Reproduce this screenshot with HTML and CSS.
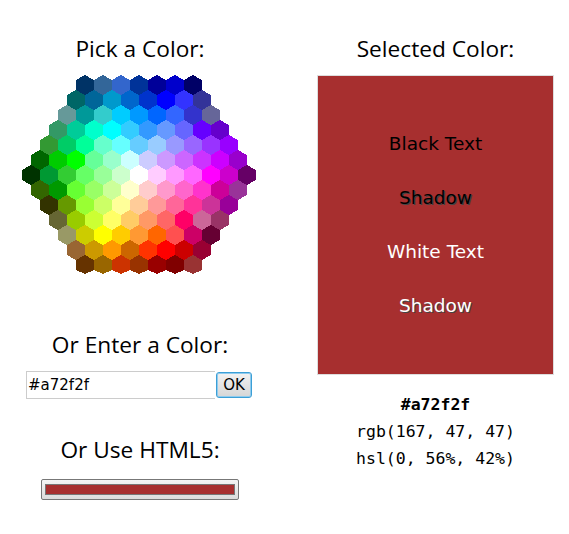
FILE: index.html
```html
<!DOCTYPE html>
<html lang="en">
<head>
<meta charset="utf-8">
<title>Color Picker</title>
<link rel="stylesheet" href="styles.css">
</head>
<body>
<main class="page">
  <section class="col col-left">
    <h3 class="title title-pick">Pick a Color:</h3>
    <svg class="map" width="234" height="200" viewBox="0 0 234 200" shape-rendering="crispEdges" role="img" aria-label="Color map">
      <defs><polygon id="h" points="9,0 18,5 18,15 9,20 0,15 0,5"/><polygon id="b" points="9,0 18,5 18,15 9,19 0,15 0,5"/></defs>
      <use href="#h" x="54" y="0" fill="#003366"/><use href="#h" x="72" y="0" fill="#336699"/><use href="#h" x="90" y="0" fill="#3366CC"/><use href="#h" x="108" y="0" fill="#003399"/><use href="#h" x="126" y="0" fill="#000099"/><use href="#h" x="144" y="0" fill="#0000CC"/><use href="#h" x="162" y="0" fill="#000066"/>
      <use href="#h" x="45" y="15" fill="#006666"/><use href="#h" x="63" y="15" fill="#006699"/><use href="#h" x="81" y="15" fill="#0099CC"/><use href="#h" x="99" y="15" fill="#0066CC"/><use href="#h" x="117" y="15" fill="#0033CC"/><use href="#h" x="135" y="15" fill="#0000FF"/><use href="#h" x="153" y="15" fill="#3333FF"/><use href="#h" x="171" y="15" fill="#333399"/>
      <use href="#h" x="36" y="30" fill="#669999"/><use href="#h" x="54" y="30" fill="#009999"/><use href="#h" x="72" y="30" fill="#33CCCC"/><use href="#h" x="90" y="30" fill="#00CCFF"/><use href="#h" x="108" y="30" fill="#0099FF"/><use href="#h" x="126" y="30" fill="#0066FF"/><use href="#h" x="144" y="30" fill="#3366FF"/><use href="#h" x="162" y="30" fill="#3333CC"/><use href="#h" x="180" y="30" fill="#666699"/>
      <use href="#h" x="27" y="45" fill="#339966"/><use href="#h" x="45" y="45" fill="#00CC99"/><use href="#h" x="63" y="45" fill="#00FFCC"/><use href="#h" x="81" y="45" fill="#00FFFF"/><use href="#h" x="99" y="45" fill="#33CCFF"/><use href="#h" x="117" y="45" fill="#3399FF"/><use href="#h" x="135" y="45" fill="#6699FF"/><use href="#h" x="153" y="45" fill="#6666FF"/><use href="#h" x="171" y="45" fill="#6600FF"/><use href="#h" x="189" y="45" fill="#6600CC"/>
      <use href="#h" x="18" y="60" fill="#339933"/><use href="#h" x="36" y="60" fill="#00CC66"/><use href="#h" x="54" y="60" fill="#00FF99"/><use href="#h" x="72" y="60" fill="#66FFCC"/><use href="#h" x="90" y="60" fill="#66FFFF"/><use href="#h" x="108" y="60" fill="#66CCFF"/><use href="#h" x="126" y="60" fill="#99CCFF"/><use href="#h" x="144" y="60" fill="#9999FF"/><use href="#h" x="162" y="60" fill="#9966FF"/><use href="#h" x="180" y="60" fill="#9933FF"/><use href="#h" x="198" y="60" fill="#9900FF"/>
      <use href="#h" x="9" y="75" fill="#006600"/><use href="#h" x="27" y="75" fill="#00CC00"/><use href="#h" x="45" y="75" fill="#00FF00"/><use href="#h" x="63" y="75" fill="#66FF99"/><use href="#h" x="81" y="75" fill="#99FFCC"/><use href="#h" x="99" y="75" fill="#CCFFFF"/><use href="#h" x="117" y="75" fill="#CCCCFF"/><use href="#h" x="135" y="75" fill="#CC99FF"/><use href="#h" x="153" y="75" fill="#CC66FF"/><use href="#h" x="171" y="75" fill="#CC33FF"/><use href="#h" x="189" y="75" fill="#CC00FF"/><use href="#h" x="207" y="75" fill="#9900CC"/>
      <use href="#h" x="0" y="90" fill="#003300"/><use href="#h" x="18" y="90" fill="#009933"/><use href="#h" x="36" y="90" fill="#33CC33"/><use href="#h" x="54" y="90" fill="#66FF66"/><use href="#h" x="72" y="90" fill="#99FF99"/><use href="#h" x="90" y="90" fill="#CCFFCC"/><use href="#h" x="108" y="90" fill="#FFFFFF"/><use href="#h" x="126" y="90" fill="#FFCCFF"/><use href="#h" x="144" y="90" fill="#FF99FF"/><use href="#h" x="162" y="90" fill="#FF66FF"/><use href="#h" x="180" y="90" fill="#FF00FF"/><use href="#h" x="198" y="90" fill="#CC00CC"/><use href="#h" x="216" y="90" fill="#660066"/>
      <use href="#h" x="9" y="105" fill="#336600"/><use href="#h" x="27" y="105" fill="#009900"/><use href="#h" x="45" y="105" fill="#66FF33"/><use href="#h" x="63" y="105" fill="#99FF66"/><use href="#h" x="81" y="105" fill="#CCFF99"/><use href="#h" x="99" y="105" fill="#FFFFCC"/><use href="#h" x="117" y="105" fill="#FFCCCC"/><use href="#h" x="135" y="105" fill="#FF99CC"/><use href="#h" x="153" y="105" fill="#FF66CC"/><use href="#h" x="171" y="105" fill="#FF33CC"/><use href="#h" x="189" y="105" fill="#CC0099"/><use href="#h" x="207" y="105" fill="#993399"/>
      <use href="#h" x="18" y="120" fill="#333300"/><use href="#h" x="36" y="120" fill="#669900"/><use href="#h" x="54" y="120" fill="#99FF33"/><use href="#h" x="72" y="120" fill="#CCFF66"/><use href="#h" x="90" y="120" fill="#FFFF99"/><use href="#h" x="108" y="120" fill="#FFCC99"/><use href="#h" x="126" y="120" fill="#FF9999"/><use href="#h" x="144" y="120" fill="#FF6699"/><use href="#h" x="162" y="120" fill="#FF3399"/><use href="#h" x="180" y="120" fill="#CC3399"/><use href="#h" x="198" y="120" fill="#990099"/>
      <use href="#h" x="27" y="135" fill="#666633"/><use href="#h" x="45" y="135" fill="#99CC00"/><use href="#h" x="63" y="135" fill="#CCFF33"/><use href="#h" x="81" y="135" fill="#FFFF66"/><use href="#h" x="99" y="135" fill="#FFCC66"/><use href="#h" x="117" y="135" fill="#FF9966"/><use href="#h" x="135" y="135" fill="#FF6666"/><use href="#h" x="153" y="135" fill="#FF0066"/><use href="#h" x="171" y="135" fill="#CC6699"/><use href="#h" x="189" y="135" fill="#993366"/>
      <use href="#h" x="36" y="150" fill="#999966"/><use href="#h" x="54" y="150" fill="#CCCC00"/><use href="#h" x="72" y="150" fill="#FFFF00"/><use href="#h" x="90" y="150" fill="#FFCC00"/><use href="#h" x="108" y="150" fill="#FF9933"/><use href="#h" x="126" y="150" fill="#FF6600"/><use href="#h" x="144" y="150" fill="#FF5050"/><use href="#h" x="162" y="150" fill="#CC0066"/><use href="#h" x="180" y="150" fill="#660033"/>
      <use href="#h" x="45" y="165" fill="#996633"/><use href="#h" x="63" y="165" fill="#CC9900"/><use href="#h" x="81" y="165" fill="#FF9900"/><use href="#h" x="99" y="165" fill="#CC6600"/><use href="#h" x="117" y="165" fill="#FF3300"/><use href="#h" x="135" y="165" fill="#FF0000"/><use href="#h" x="153" y="165" fill="#CC0000"/><use href="#h" x="171" y="165" fill="#990033"/>
      <use href="#b" x="54" y="180" fill="#663300"/><use href="#b" x="72" y="180" fill="#996600"/><use href="#b" x="90" y="180" fill="#CC3300"/><use href="#b" x="108" y="180" fill="#993300"/><use href="#b" x="126" y="180" fill="#990000"/><use href="#b" x="144" y="180" fill="#800000"/><use href="#b" x="162" y="180" fill="#993333"/>
    </svg>
    <h3 class="title title-enter">Or Enter a Color:</h3>
    <div class="enter-row">
      <input class="hex-input" type="text" value="#a72f2f" aria-label="Color value">
      <button class="ok-btn" type="button">OK</button>
    </div>
    <h3 class="title title-html5">Or Use HTML5:</h3>
    <div class="color-well" role="img" aria-label="Color input"><span class="color-well-swatch"></span></div>
  </section>
  <section class="col col-right">
    <h3 class="title title-pick">Selected Color:</h3>
    <div class="swatch">
      <div class="swatch-line">Black Text</div>
      <div class="swatch-line text-shadow">Shadow</div>
      <div class="swatch-line white">White Text</div>
      <div class="swatch-line white text-shadow">Shadow</div>
    </div>
    <div class="codes">
      <div class="code-hex">#a72f2f</div>
      <div>rgb(167, 47, 47)</div>
      <div>hsl(0, 56%, 42%)</div>
    </div>
  </section>
</main>
</body>
</html>
```
FILE: styles.css
```css
html, body { margin: 0; padding: 0; background: #fff; }
body { width: 569px; height: 534px; overflow: hidden; color: #000; }
.page { display: flex; align-items: flex-start; padding-left: 22px; }
.col { display: flex; flex-direction: column; align-items: center; }
.col-left { width: 236px; }
.col-right { width: 237px; margin-left: 59px; }
.title { margin: 0; font: 400 22.7px/32px "Open Sans", sans-serif; white-space: nowrap; }
.title-pick { margin-top: 33px; }
.map { display: block; margin-top: 10px; align-self: flex-start; }
.title-enter { margin-top: 54px; }
.enter-row { display: flex; align-items: center; gap: 1px; margin-top: 10px; align-self: flex-start; margin-left: 4px; }
.hex-input { box-sizing: border-box; width: 189px; height: 28px; margin: 0; padding: 0 1px; border: 1px solid #ccc; border-right: 0; font: 15px "DejaVu Sans", sans-serif; color: #000; background: #fff; outline: none; }
.ok-btn { box-sizing: border-box; width: 36px; height: 26px; margin: 0; padding: 0; border: 1px solid #3c9fd6; border-radius: 3px; box-shadow: inset 0 0 0 1px #8fcbee; background: linear-gradient(#f2f2f2, #d6d6d6); font: 15px "DejaVu Sans", sans-serif; color: #000; }
.title-html5 { margin-top: 35px; }
.color-well { box-sizing: border-box; width: 198px; height: 21px; margin-top: 13px; padding: 4px 3px; border: 1px solid #777; border-radius: 2px; background: linear-gradient(#f4f4f4, #dcdcdc); display: flex; }
.color-well-swatch { flex: 1; background: #a72f2f; border: 1px solid #777; }
.swatch { box-sizing: border-box; width: 237px; height: 300px; margin-top: 10px; border: 1px solid #ddd; background: #a72f2f; display: flex; flex-direction: column; padding-top: 55px; gap: 28px; align-items: center; font: 18.5px/26px "DejaVu Sans", sans-serif; }
.white { color: #fff; }
.text-shadow { text-shadow: 1px 1px 0 #444; }
.codes { margin-top: 16px; text-align: center; font: 16.5px/27px "DejaVu Sans Mono", monospace; }
.code-hex { font-weight: 700; }
```
